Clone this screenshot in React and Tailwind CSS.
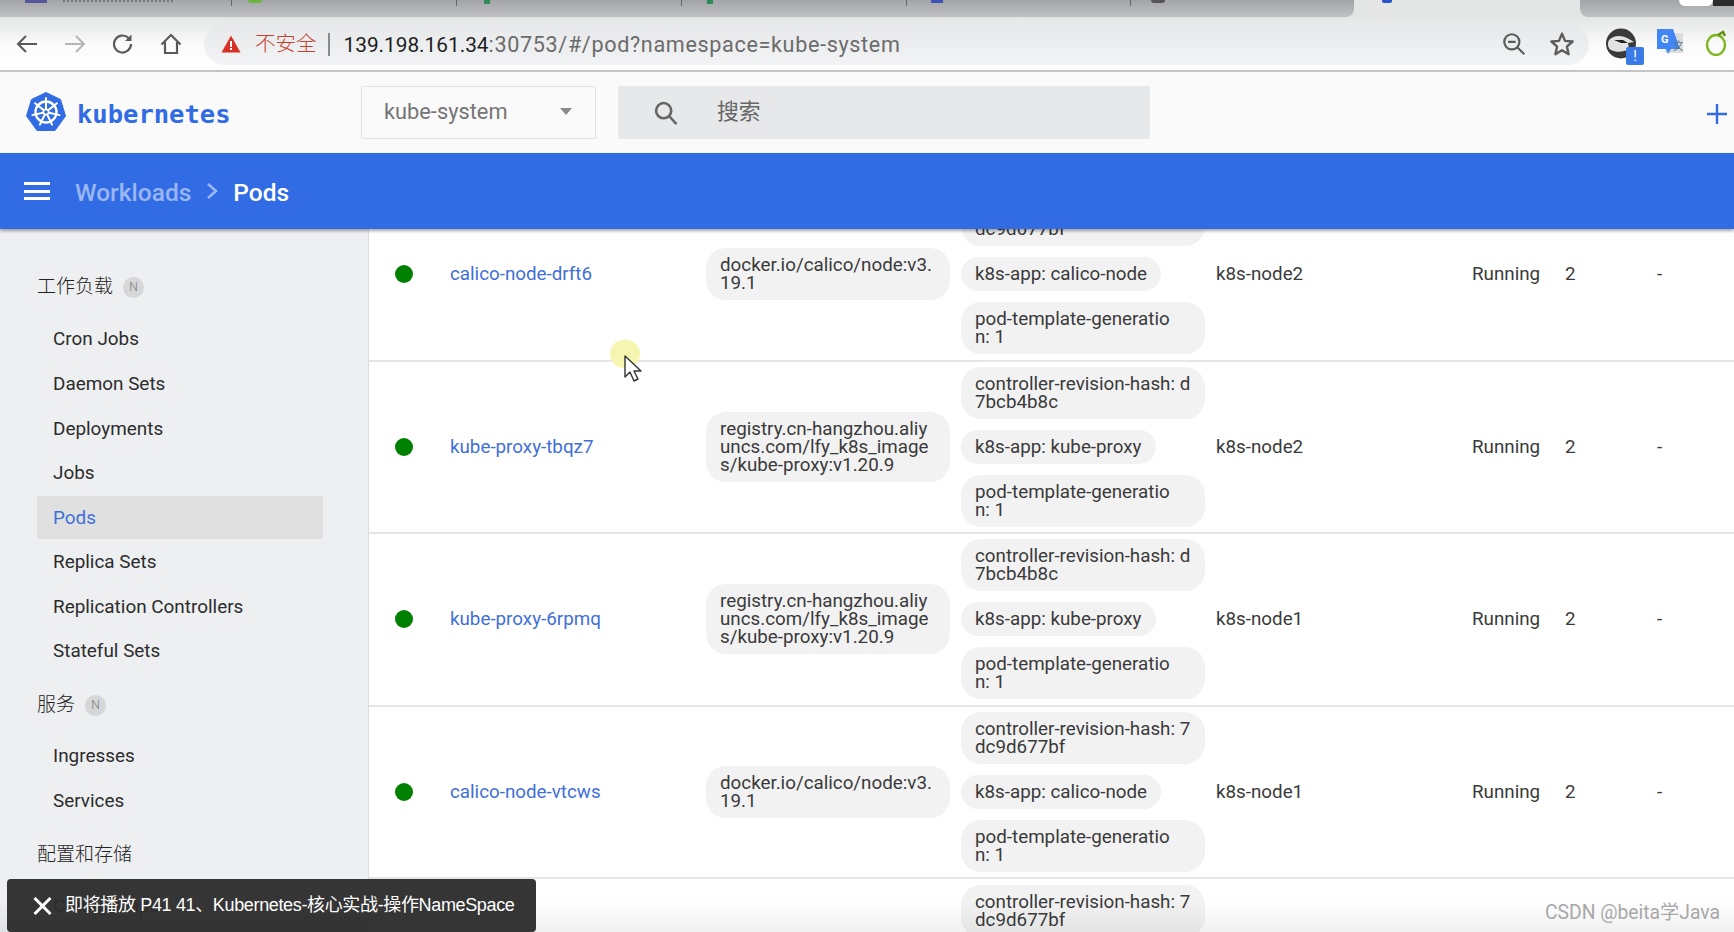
import React from "react";

const cjk = '"Roboto","Noto Sans CJK SC",sans-serif';

const Pill = ({ children, full }) => (
  <div className={`bg-[#f2f2f2] rounded-[20px] px-[14px] py-[8px] text-[18.8px] leading-[18px] text-[#3a3a3a] whitespace-pre ${full ? "w-[244px]" : "w-fit"}`}>
    {children}
  </div>
);

const rows = [
  ["calico-node-drft6", "docker.io/calico/node:v3.\n19.1", "controller-revision-hash: 7\ndc9d677bf", "k8s-app: calico-node", "k8s-node2"],
  ["kube-proxy-tbqz7", "registry.cn-hangzhou.aliy\nuncs.com/lfy_k8s_image\ns/kube-proxy:v1.20.9", "controller-revision-hash: d\n7bcb4b8c", "k8s-app: kube-proxy", "k8s-node2"],
  ["kube-proxy-6rpmq", "registry.cn-hangzhou.aliy\nuncs.com/lfy_k8s_image\ns/kube-proxy:v1.20.9", "controller-revision-hash: d\n7bcb4b8c", "k8s-app: kube-proxy", "k8s-node1"],
  ["calico-node-vtcws", "docker.io/calico/node:v3.\n19.1", "controller-revision-hash: 7\ndc9d677bf", "k8s-app: calico-node", "k8s-node1"],
  ["calico-node-kxk2p", "docker.io/calico/node:v3.\n19.1", "controller-revision-hash: 7\ndc9d677bf", "k8s-app: calico-node", "k8s-node3"],
];

const Row = ({ r }) => (
  <div className="flex items-center h-[172.6px] shrink-0 border-b-2 border-[#e6e6e6] text-[18.8px] text-[#3a3a3a]">
    <div className="w-[35px] shrink-0 ml-[26px] mr-[20px] flex">
      <span className="w-[18px] h-[18px] rounded-full bg-[#008000]" />
    </div>
    <div className="w-[256px] shrink-0 text-[#3f6fd8]">{r[0]}</div>
    <div className="w-[255px] shrink-0"><Pill full>{r[1]}</Pill></div>
    <div className="w-[255px] shrink-0 flex flex-col gap-[11px] ">
      <Pill full>{r[2]}</Pill>
      <Pill>{r[3]}</Pill>
      <Pill full>{"pod-template-generatio\nn: 1"}</Pill>
    </div>
    <div className="w-[256px] shrink-0">{r[4]}</div>
    <div className="w-[93px] shrink-0">Running</div>
    <div className="w-[92px] shrink-0">2</div>
    <div>-</div>
  </div>
);

const Item = ({ children, active }) => (
  <div className={`h-[43px] mb-[1.6px] mr-[45px] ml-[37px] pl-[16px] flex items-center rounded-[2px] text-[18.9px] ${active ? "bg-[#e0e0e0] text-[#3f6fd8]" : "text-[#2c2c2c]"}`}>
    {children}
  </div>
);

const Section = ({ children, badge, cls }) => (
  <div className={`flex items-center pl-[37px] text-[19px] text-[#222] font-light ${cls}`}>
    <span>{children}</span>
    {badge && (
      <span className="ml-[10px] w-[21px] h-[21px] rounded-full bg-[#d6d7d9] text-[#777] text-[12px] flex items-center justify-center">N</span>
    )}
  </div>
);

const Logo = () => (
  <svg width="40" height="40" viewBox="0 0 40 40">
    <path d="M20 0.5 L34.5 7.5 L39.5 24 L29 38.5 L11 38.5 L0.5 24 L5.5 7.5 Z" fill="#326ce5" stroke="#326ce5" strokeWidth="1" strokeLinejoin="round" />
    <g stroke="#fff" fill="none">
      <circle cx="20" cy="20" r="10.5" strokeWidth="2.4" />
      <circle cx="20" cy="20" r="2.6" strokeWidth="1.6" />
      {[0, 51.4, 102.8, 154.3, 205.7, 257.1, 308.6].map((a) => (
        <g key={a} transform={`rotate(${a} 20 20)`}>
          <line x1="20" y1="17" x2="20" y2="6" strokeWidth="2" strokeLinecap="round" />
        </g>
      ))}
    </g>
  </svg>
);

export default function App() {
  return (
    <div className="relative w-full h-[932px] overflow-hidden flex flex-col bg-white" style={{ fontFamily: cjk }}>
      {/* Browser tab strip */}
      <div className="h-[17px] shrink-0 flex bg-[#e4e5e5]">
        <div className="w-[1354px] h-full rounded-br-[8px] bg-gradient-to-b from-[#a2a4a7] to-[#c0c1c4] flex items-start overflow-hidden">
          <div className="w-[232px] h-[6px] border-r border-[#666] flex">
            <span className="ml-[25px] w-[22px] h-[3px] bg-[#55559a]" />
            <span className="ml-[16px] mt-[0px] w-[110px] h-[2px] border-t-2 border-dotted border-[#777]" />
          </div>
          <div className="w-[225px] h-[6px] border-r border-[#666]">
            <span className="block ml-[16px] w-[14px] h-[3px] rounded-b-full bg-[#6db33f]" />
          </div>
          <div className="w-[225px] h-[6px] border-r border-[#666]">
            <span className="block ml-[27px] w-[6px] h-[4px] bg-[#2e8b57]" />
          </div>
          <div className="w-[225px] h-[6px] border-r border-[#666]">
            <span className="block ml-[25px] w-[6px] h-[4px] bg-[#2e8b57]" />
          </div>
          <div className="w-[224px] h-[6px] border-r border-[#666]">
            <span className="block ml-[24px] w-[12px] h-[3px] bg-[#3f51b5]" />
          </div>
          <div className="h-[4px]">
            <span className="block ml-[20px] w-[14px] h-[3px] rounded-b-full bg-[#555]" />
          </div>
        </div>
        <div className="w-[226px] h-full">
          <span className="block ml-[28px] w-[10px] h-[3px] rounded-b-[2px] bg-[#2a55c9]" />
        </div>
        <div className="flex-1 h-full rounded-bl-[8px] bg-gradient-to-b from-[#a2a4a7] to-[#c0c1c4] flex justify-end overflow-hidden">
          <span className="w-[34px] h-[6px] rounded-b-full bg-white" />
          <span className="w-[21px] h-[6px] bg-[#2d2d2d]" />
        </div>
      </div>

      {/* Browser toolbar */}
      <div className="h-[55px] shrink-0 border-b-2 border-[#c4c4c4] bg-gradient-to-b from-[#e4e5e5] via-[#fafafa] to-white flex items-start pt-[6px]">
        <div className="w-[204px] h-[42px] shrink-0 flex items-center pl-[15px]">
          <svg width="24" height="24" viewBox="0 0 24 24" fill="none" stroke="#5a5a5a" strokeWidth="2"><path d="M22 12H3M11 4l-8 8 8 8" /></svg>
          <svg className="ml-[24px]" width="24" height="24" viewBox="0 0 24 24" fill="none" stroke="#b5b5b5" strokeWidth="2"><path d="M2 12h19M13 4l8 8-8 8" /></svg>
          <svg className="ml-[24px]" width="24" height="24" viewBox="0 0 24 24" fill="none" stroke="#5a5a5a" strokeWidth="2.2"><path d="M20 12a8.500 8.500 0 1 1-2.600-6.100" /><path d="M20.500 2.500v6.500H14" fill="#5a5a5a" stroke="none" /></svg>
          <svg className="ml-[24px]" width="24" height="24" viewBox="0 0 24 24" fill="none" stroke="#5a5a5a" strokeWidth="2.2"><path d="M2.500 12.500 12 3l9.500 9.500M6 10v11h12V10" /></svg>
        </div>
        <div className="w-[1385px] h-[42px] shrink-0 rounded-full bg-gradient-to-b from-[#e7e8ea] to-[#f1f3f4] flex items-center pl-[17px]">
          <svg width="20" height="18" viewBox="0 0 20 18"><path d="M10 0.500 19.500 17.500H0.500Z" fill="#d93025" /><rect x="9" y="6" width="2" height="6" fill="#fff" /><rect x="9" y="13" width="2" height="2" fill="#fff" /></svg>
          <span className="ml-[14px] text-[20.5px] text-[#c5402f] font-light mt-[1px]">不安全</span>
          <span className="ml-[11px] w-[2px] h-[23px] bg-[#8a8a8a]" />
          <span className="ml-[14px] text-[20.8px] text-[#1d1d1d] mt-[3px]">139.198.161.34<span className="text-[#6b6b6b] text-[21.6px] tracking-[0.65px]">:30753/#/pod?namespace=kube-system</span></span>
          <span className="flex-1" />
          <svg width="26" height="26" viewBox="0 0 24 24" fill="none" stroke="#5c5c5c" strokeWidth="2"><circle cx="10" cy="10" r="7" /><path d="M15 15l6.500 6.500M6.500 10h7" /></svg>
          <svg className="ml-[22px] mr-[14px]" width="26" height="26" viewBox="0 0 24 24" fill="none" stroke="#5c5c5c" strokeWidth="2.2" strokeLinejoin="round"><path d="M12 2.500l2.800 6.600 7 .6-5.300 4.700 1.600 7-6.100-3.700-6.100 3.700 1.600-7L2.200 9.700l7-.6z" /></svg>
        </div>
        <div className="relative flex-1 h-[42px] flex items-center">
          <svg className="ml-[17px] -mt-[2px]" width="30" height="31" viewBox="0 0 30 31">
            <circle cx="15" cy="15.500" r="15" fill="#3a3a3a" />
            <path d="M3 12c5-5 13-5 20-1l5 3-6 1 1 6c-5 3-12 4-18 1C2 20 1 16 3 12z" fill="#e2e2e2" />
            <path d="M8 12l9 0 5 3-7 0z" fill="#222" />
          </svg>
          <span className="absolute left-[37px] top-[24px] w-[18px] h-[18px] rounded-[2px] bg-[#3b7be8] text-white text-[14px] leading-[18px] text-center">!</span>
          <svg className="ml-[21px] -mt-[4px]" width="26" height="26" viewBox="0 0 26 26"><rect x="8" y="4" width="18" height="20" fill="#dcdcdc" /><path d="M0 0h16l7 20-9 0-3 5-2-5H0z" fill="#4285f4" /><text x="4" y="14" fill="#fff" fontSize="11" fontWeight="700">G</text><text x="16" y="21" fill="#5c7a8a" fontSize="11">文</text></svg>
          <svg className="ml-[22px] -mt-[2px]" width="24" height="26" viewBox="0 0 24 26" fill="none"><ellipse cx="11" cy="15" rx="9" ry="10" stroke="#7fb51e" strokeWidth="2.400" /><path d="M13 5l5-3 2 4" stroke="#5f8f14" strokeWidth="2.500" /></svg>
        </div>
      </div>

      {/* App header */}
      <div className="h-[81px] shrink-0 bg-[#fafafa] flex items-center">
        <div className="ml-[26px] -mt-[1px]"><Logo /></div>
        <div className="ml-[11px] w-[284px] shrink-0 text-[25.5px] font-bold text-[#326ce5] mt-[3px]" style={{ fontFamily: '"DejaVu Sans Mono",monospace' }}>kubernetes</div>
        <div className="w-[235px] h-[53px] shrink-0 border border-[#e2e2e2] rounded-[2px] flex items-center pl-[22px] pr-[23px] text-[21.8px] text-[#757575]">
          <span className="flex-1">kube-system</span>
          <span className="w-0 h-0 border-x-[6.500px] border-x-transparent border-t-[7px] border-t-[#8a8a8a] -mt-[2px]" />
        </div>
        <div className="ml-[22px] w-[532px] h-[53px] shrink-0 rounded-[2px] bg-[#e6e8e9] flex items-center pl-[34px] text-[21.8px] text-[#666]">
          <svg width="28" height="28" viewBox="0 0 24 24" fill="none" stroke="#666" strokeWidth="2.2"><circle cx="10" cy="10" r="6.500" /><path d="M15 15l6 6.500" /></svg>
          <span className="ml-[37px]">搜索</span>
        </div>
        <div className="ml-auto mr-[7px] mt-[2px]">
          <svg width="20" height="20" viewBox="0 0 20 20" stroke="#326ce5" strokeWidth="2.400"><path d="M10 0v20M0 10h20" /></svg>
        </div>
      </div>

      {/* Blue bar */}
      <div className="relative z-10 h-[76px] shrink-0 bg-[#326ce5] shadow-[0_2px_3px_rgba(0,0,0,0.35)] flex items-center text-[24.5px] font-medium">
        <div className="ml-[24px] w-[26px] flex flex-col gap-[4.500px]">
          <span className="h-[3px] bg-white" /><span className="h-[3px] bg-white" /><span className="h-[3px] bg-white" />
        </div>
        <span className="ml-[25px] text-[#9ab6f3] mt-[4px]">Workloads</span>
        <svg className="ml-[15px]" width="12" height="18" viewBox="0 0 12 18" fill="none" stroke="#9ab6f3" strokeWidth="2.600"><path d="M2 2l8 7-8 7" /></svg>
        <span className="ml-[15px] text-white mt-[4px]">Pods</span>
      </div>

      {/* Body */}
      <div className="flex-1 min-h-0 flex">
        <div className="w-[369px] shrink-0 bg-[#eeeff1] border-r border-[#dedede] pt-[44px]">
          <Section badge cls="h-[28px] mb-[17px]">工作负载</Section>
          <Item>Cron Jobs</Item>
          <Item>Daemon Sets</Item>
          <Item>Deployments</Item>
          <Item>Jobs</Item>
          <Item active>Pods</Item>
          <Item>Replica Sets</Item>
          <Item>Replication Controllers</Item>
          <Item>Stateful Sets</Item>
          <Section badge cls="h-[28px] mt-[18px] mb-[16px]">服务</Section>
          <Item>Ingresses</Item>
          <Item>Services</Item>
          <Section cls="h-[28px] mt-[18px] mb-[16px]">配置和存储</Section>
          <Item>Config Maps</Item>
        </div>
        <div className="flex-1 min-w-0 overflow-hidden">
          <div className="flex flex-col -mt-[40px]">
            {rows.map((r) => <Row key={r[0]} r={r} />)}
          </div>
        </div>
      </div>

      {/* bottom video fade */}
      <div className="absolute left-0 right-0 bottom-0 h-[32px] bg-gradient-to-b from-transparent to-[rgba(0,0,0,0.06)] pointer-events-none" />

      {/* Mouse highlight + cursor */}
      <span className="absolute left-[610px] top-[340px] w-[30px] h-[28px] rounded-full bg-[#f6f6b0]" />
      <svg className="absolute left-[624px] top-[355px]" width="20" height="28" viewBox="0 0 20 28">
        <path d="M1 1v21l5-5 4 9 4-2-4-8h7z" fill="#fff" stroke="#333" strokeWidth="1.400" strokeLinejoin="round" />
      </svg>

      {/* Toast */}
      <div className="absolute left-[7px] bottom-0 w-[529px] h-[53px] rounded-[4px] bg-[rgba(45,45,45,0.96)] flex items-center pl-[26px] text-white text-[18px] tracking-[-0.35px]" style={{ fontFamily: '"Liberation Sans","Noto Sans CJK SC",sans-serif' }}>
        <svg width="19" height="18" viewBox="0 0 19 18" stroke="#fff" strokeWidth="3"><path d="M1.500 1l16 16M17.500 1l-16 16" /></svg>
        <span className="ml-[13px]">即将播放 P41 41、Kubernetes-核心实战-操作NameSpace</span>
      </div>

      {/* Watermark */}
      <div className="absolute left-[1545px] top-[901px] text-[19.3px] leading-[24px] text-[#a8a8a8]">CSDN @beita学Java</div>
    </div>
  );
}
